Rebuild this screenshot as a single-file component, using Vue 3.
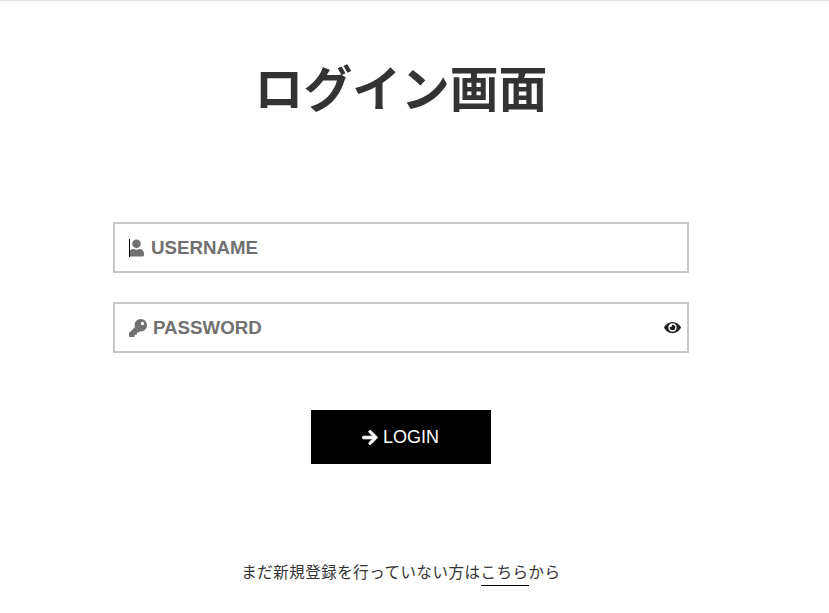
<template>
  <div class="login-page">
    <div class="login-inner">
      <h1 class="title">ログイン画面</h1>

      <form class="login-form" @submit.prevent>
        <div class="field">
          <span class="caret"></span>
          <svg class="icon user-icon" viewBox="0 0 448 512">
            <path fill="currentColor" d="M224 256a128 128 0 1 0 0-256 128 128 0 0 0 0 256zm89.600 32h-16.700a174.100 174.100 0 0 1-145.800 0h-16.700C60.200 288 0 348.200 0 422.400V464c0 26.500 21.500 48 48 48h352c26.500 0 48-21.500 48-48v-41.600c0-74.200-60.200-134.400-134.400-134.400z"/>
          </svg>
          <span class="placeholder">USERNAME</span>
        </div>

        <div class="field">
          <svg class="icon key-icon" viewBox="0 0 512 512">
            <path fill="currentColor" d="M512 176.001C512 273.203 433.202 352 336 352c-11.220 0-22.190-1.062-32.827-3.069l-24.012 27.014A23.999 23.999 0 0 1 261.223 384H224v40c0 13.255-10.745 24-24 24h-40v40c0 13.255-10.745 24-24 24H24c-13.255 0-24-10.745-24-24v-78.059c0-6.365 2.529-12.470 7.029-16.971l161.802-161.802C163.108 213.814 160 195.271 160 176 160 78.798 238.797.001 335.999 0 433.488-.001 512 78.511 512 176.001zM336 128c0 26.510 21.490 48 48 48s48-21.490 48-48-21.490-48-48-48-48 21.490-48 48z"/>
          </svg>
          <span class="placeholder">PASSWORD</span>
          <svg class="eye-icon" viewBox="0 0 576 512">
            <path fill="currentColor" d="M572.520 241.400C518.290 135.590 410.930 64 288 64S57.680 135.640 3.480 241.410a32.350 32.350 0 0 0 0 29.190C57.710 376.410 165.070 448 288 448s230.320-71.640 284.520-177.410a32.350 32.350 0 0 0 0-29.190zM288 400a144 144 0 1 1 144-144 143.930 143.930 0 0 1-144 144zm0-240a95.310 95.310 0 0 0-25.310 3.790 47.850 47.850 0 0 1-66.900 66.900A95.780 95.780 0 1 0 288 160z"/>
          </svg>
        </div>

        <button class="login-btn" type="submit">
          <svg class="arrow-icon" viewBox="0 0 448 512">
            <path fill="currentColor" stroke="currentColor" stroke-width="28" d="M190.500 66.900l22.200-22.200c9.400-9.400 24.600-9.400 33.900 0L441 239c9.400 9.400 9.400 24.600 0 33.900L246.600 467.300c-9.400 9.400-24.600 9.400-33.900 0l-22.200-22.200c-9.500-9.500-9.300-25 .4-34.300L311.400 296H24c-13.300 0-24-10.700-24-24v-32c0-13.300 10.700-24 24-24h287.400L190.900 101.200c-9.800-9.300-10-24.800-.4-34.300z"/>
          </svg>
          LOGIN
        </button>
      </form>

      <p class="signup">まだ新規登録を行っていない方は<a class="signup-link" href="#">こちら</a>から</p>
    </div>
  </div>
</template>

<script setup>
</script>

<style scoped>
.login-page {
  box-sizing: border-box;
  height: 613px;
  border-top: 1px solid #e0e0e0;
  padding-left: 113px;
  overflow: hidden;
  font-family: "Liberation Sans", "Noto Sans CJK JP", sans-serif;
}

.login-inner {
  width: 576px;
}

.title {
  margin: 59px 0 0;
  font-size: 48.800px;
  line-height: 60px;
  font-weight: 700;
  color: #333;
  text-align: center;
  white-space: nowrap;
}

.login-form {
  display: flex;
  flex-direction: column;
  align-items: center;
  margin-top: 102px;
}

.field {
  box-sizing: border-box;
  position: relative;
  display: flex;
  align-items: center;
  width: 100%;
  height: 51px;
  margin-bottom: 29px;
  padding-left: 14px;
  border: 2px solid #c8c8c8;
  color: #707070;
}

.caret {
  position: absolute;
  left: 14px;
  top: 15px;
  width: 1px;
  height: 18px;
  background: #000;
}

.icon {
  flex-shrink: 0;
}

.user-icon {
  width: 15px;
  height: 18px;
  margin-right: 7px;
}

.key-icon {
  width: 18px;
  height: 18px;
  margin-right: 6px;
}

.placeholder {
  font-size: 18.700px;
  font-weight: 700;
}

.eye-icon {
  width: 17px;
  height: 15px;
  margin-left: auto;
  margin-right: 6px;
  color: #222;
}

.login-btn {
  display: flex;
  align-items: center;
  justify-content: center;
  gap: 4px;
  width: 180px;
  height: 54px;
  margin-top: 28px;
  padding: 0 2px 0 0;
  border: none;
  background: #000;
  color: #fff;
  font-family: inherit;
  font-size: 18px;
}

.arrow-icon {
  width: 18px;
  height: 17px;
}

.signup {
  margin: 99px 0 0;
  font-size: 15.500px;
  line-height: 20px;
  color: #333;
  text-align: center;
  letter-spacing: 0.5px;
}

.signup-link {
  display: inline-block;
  color: #333;
  text-decoration: none;
  border-bottom: 1px solid #000;
  padding-bottom: 2px;
}
</style>

<style>
html, body {
  background: #fff;
}
</style>
